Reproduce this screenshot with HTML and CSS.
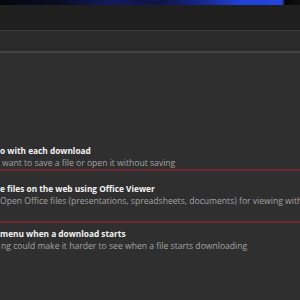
FILE: index.html
```html
<!DOCTYPE html>
<html>
<head>
<meta charset="utf-8">
<link rel="stylesheet" href="styles.css">
</head>
<body>
<div class="wallpaper"></div>
<div class="topbar"></div>
<div class="band"></div>
<main class="panel">
  <section class="row row-first">
    <div class="title">o with each download</div>
    <div class="desc">want to save a file or open it without saving</div>
  </section>
  <section class="row row-second">
    <div class="title">e files on the web using Office Viewer</div>
    <div class="desc">Open Office files (presentations, spreadsheets, documents) for viewing within</div>
  </section>
  <section class="row row-third">
    <div class="title">menu when a download starts</div>
    <div class="desc">ng could make it harder to see when a file starts downloading</div>
  </section>
</main>
</body>
</html>
```
FILE: styles.css
```css
html, body {
  margin: 0;
  padding: 0;
  width: 300px;
  height: 300px;
  overflow: hidden;
  background: #2f2f2f;
  font-family: "Open Sans", "Noto Sans", sans-serif;
}
.wallpaper {
  height: 5px;
  background: linear-gradient(90deg, #07070f 0px, #0b0d24 60px, #121a5a 110px, #0e1446 160px, #1a2a9a 210px, #2141d6 240px, #2445e0 282px, #050505 285px, #111 300px);
}
.topbar {
  height: 25px;
  background: #1f1f1f;
  border-bottom: 1px solid #3b3b3b;
}
.band {
  height: 20px;
  background: #2a2a2a;
  border-bottom: 2px solid #444;
}
.panel {
  background: #2f2f2f;
}
.row {
  white-space: nowrap;
  overflow: hidden;
}
.row-first {
  padding-top: 91px;
  border-bottom: 2px solid #6e2832;
}
.row-second {
  padding-top: 11px;
  padding-bottom: 14px;
  border-bottom: 2px solid #6e2832;
}
.row-third {
  padding-top: 4px;
}
.title {
  font-size: 8.3px;
  font-weight: 700;
  line-height: 13px;
  color: #f4f4f4;
}
.desc {
  font-size: 8.6px;
  line-height: 12px;
  color: #a3a3a3;
}
.row-first .desc { padding-left: 2px; }
.row-third .desc { padding-left: 1px; }
```
